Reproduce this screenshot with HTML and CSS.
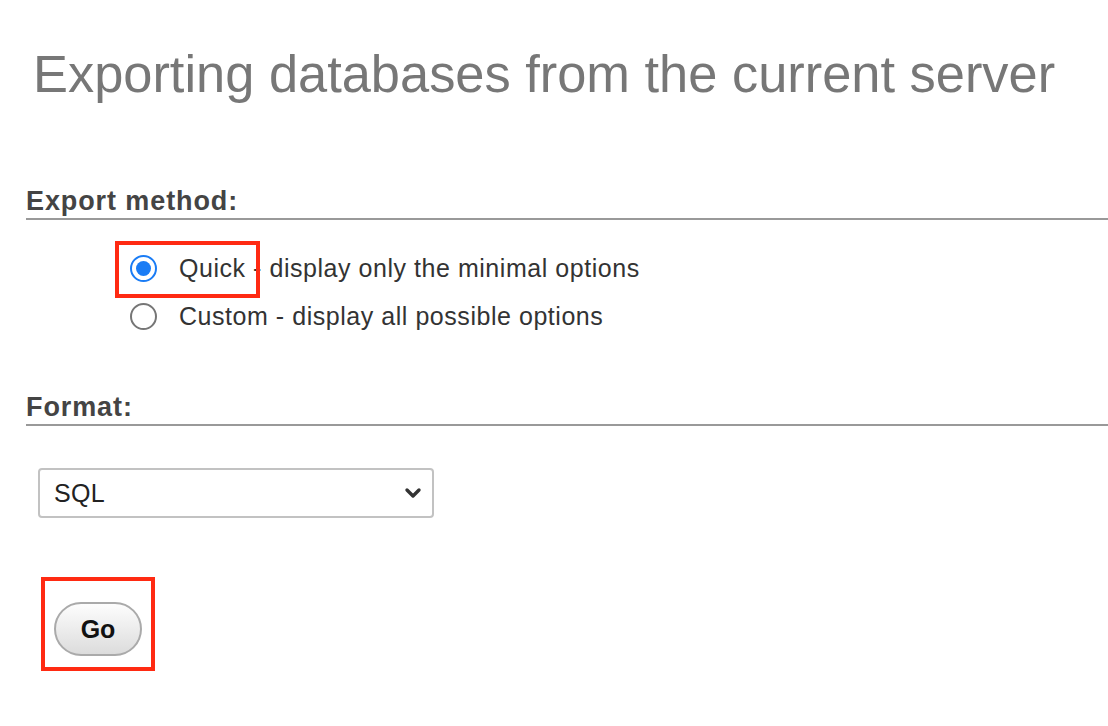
FILE: index.html
```html
<!DOCTYPE html>
<html>
<head>
<meta charset="utf-8">
<link rel="stylesheet" href="styles.css">
</head>
<body>
<div class="page">
  <h1 class="title">Exporting databases from the current server</h1>

  <section class="group">
    <h2 class="group-head">Export method:</h2>
    <ul class="options">
      <li class="option"><span class="radio checked"></span><span class="label">Quick - display only the minimal options</span></li>
      <li class="option"><span class="radio"></span><span class="label">Custom - display all possible options</span></li>
    </ul>
  </section>

  <section class="group format">
    <h2 class="group-head">Format:</h2>
    <div class="select">
      <span class="select-value">SQL</span>
      <svg class="chevron" width="18" height="12" viewBox="0 0 18 12"><path d="M3 3 L9 9 L15 3" fill="none" stroke="#333" stroke-width="3.4" stroke-linecap="round" stroke-linejoin="round"/></svg>
    </div>
  </section>

  <div class="actions">
    <button class="go">Go</button>
  </div>
</div>
<div class="mark mark-quick"></div>
<div class="mark mark-go"></div>
</body>
</html>
```
FILE: styles.css
```css
html, body {
  margin: 0;
  padding: 0;
  background: #fff;
}
body {
  font-family: "Liberation Sans", Arial, Helvetica, sans-serif;
  color: #444;
  width: 1108px;
  height: 726px;
  position: relative;
  overflow: hidden;
}
.page {
  padding: 44px 0 0 26px;
}
.title {
  margin: 0 0 0 7px;
  font-size: 52.4px;
  line-height: 60px;
  font-weight: normal;
  color: #777;
}
.group {
  margin-top: 82px;
}
.group-head {
  margin: 0;
  font-size: 27px;
  letter-spacing: 0.9px;
  line-height: 30px;
  font-weight: bold;
  color: #444;
  padding-bottom: 2px;
  border-bottom: 2px solid #999;
}
.options {
  list-style: none;
  margin: 0;
  padding: 24px 0 0 104px;
}
.option {
  display: flex;
  align-items: center;
  height: 48px;
  font-size: 25px;
  letter-spacing: 0.54px;
}
.radio {
  box-sizing: border-box;
  width: 27px;
  height: 27px;
  border-radius: 50%;
  border: 2px solid #767676;
  margin-right: 22px;
  display: flex;
  align-items: center;
  justify-content: center;
}
.radio.checked {
  border-color: #1a7cf5;
}
.radio.checked::after {
  content: "";
  width: 15px;
  height: 15px;
  border-radius: 50%;
  background: #1a7cf5;
}
.label {
  color: #333;
}
.format {
  margin-top: 52px;
}
.select {
  box-sizing: border-box;
  margin: 42px 0 0 12px;
  width: 396px;
  height: 50px;
  border: 2px solid #c2c2c2;
  border-radius: 4px;
  display: flex;
  align-items: center;
  justify-content: space-between;
  padding: 0 10px 0 14px;
  font-size: 25px;
  letter-spacing: 0.3px;
  color: #222;
}
.chevron {
  display: block;
}
.actions {
  padding: 84px 0 0 28px;
}
.go {
  box-sizing: border-box;
  width: 88px;
  height: 54px;
  border-radius: 27px;
  border: 2px solid #aaa;
  background: linear-gradient(#fdfdfd, #dcdcdc);
  font-family: "Liberation Sans", Arial, sans-serif;
  font-weight: bold;
  font-size: 25px;
  color: #111;
  padding: 0;
}
.mark {
  position: absolute;
  box-sizing: border-box;
  border: 4px solid #ff2a12;
}
.mark-quick {
  left: 115px;
  top: 241px;
  width: 145px;
  height: 57px;
}
.mark-go {
  left: 41px;
  top: 577px;
  width: 114px;
  height: 94px;
}
```
